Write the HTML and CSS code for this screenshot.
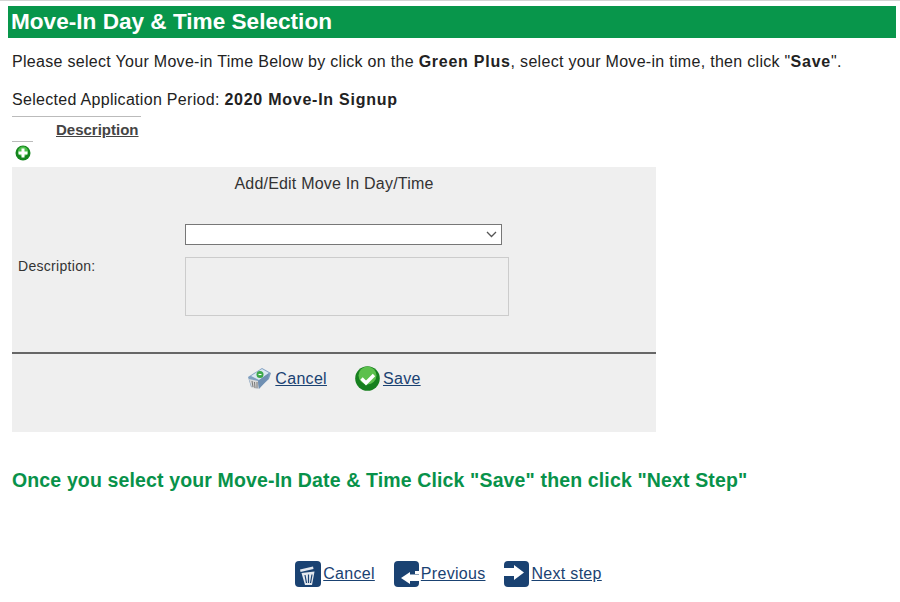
FILE: index.html
```html
<!DOCTYPE html>
<html lang="en">
<head>
  <meta charset="UTF-8" />
  <title>Move-In Day &amp; Time Selection</title>
  <link rel="stylesheet" href="styles.css">
</head>
<body>
  <h1 class="title">Move-In Day &amp; Time Selection</h1>

  <p class="intro">Please select Your Move-in Time Below by click on the <b>Green Plus</b>, select your Move-in time, then click "<b>Save</b>".</p>
  <p class="period">Selected Application Period: <b>2020 Move-In Signup</b></p>

  <!-- Tabla vacia con boton de agregar -->
  <div class="list-head">
    <a href="#" class="col-name">Description</a>
  </div>
  <div class="list-add">
    <svg width="16" height="16" viewBox="0 0 16 16">
      <circle cx="8" cy="8" r="7.500" fill="#14861e"/>
      <circle cx="8" cy="6.500" r="5" fill="#4cc04a"/>
      <path d="M6.500 3.500h3v3h3v3h-3v3h-3v-3h-3v-3h3z" fill="#fff"/>
    </svg>
  </div>

  <div class="edit-panel">
    <div class="edit-title">Add/Edit Move In Day/Time</div>
    <div class="edit-form">
      <label class="edit-label">Description:</label>
      <div class="edit-fields">
        <div class="fake-select">
          <svg width="11" height="7" viewBox="0 0 11 7"><path d="M1 1l4.500 4.500L10 1" fill="none" stroke="#555" stroke-width="1.300"/></svg>
        </div>
        <div class="fake-textarea"></div>
      </div>
    </div>
    <div class="edit-actions">
      <a href="#" class="action">
        <svg width="25" height="25" viewBox="0 0 25 25">
          <path d="M1 11L15 2l9 5-2 6-11 10-7-2z" fill="#7f9fc0"/>
          <path d="M4 10l11-7 7 4-10 7z" fill="#dbe7f2"/>
          <path d="M2 13l9 2 1 8-7-1z" fill="#d9d9d9"/>
          <path d="M11 15l11-8-1 6-9 10z" fill="#6f8fb2"/>
          <circle cx="13" cy="8.500" r="3.500" fill="#3aa648"/>
          <path d="M11.500 8.500h3" stroke="#fff" stroke-width="1.200"/>
          <path d="M5 15l1 6M7.500 16l.5 6M10 16v6" stroke="#777" stroke-width="1"/>
        </svg>
        <span>Cancel</span>
      </a>
      <a href="#" class="action">
        <svg width="25" height="25" viewBox="0 0 25 25">
          <circle cx="12.500" cy="12.500" r="12.300" fill="#17801f"/>
          <circle cx="12.500" cy="9.500" r="9" fill="#5cc04c"/>
          <path d="M6.500 12.500l4.500 4.500 8-8" fill="none" stroke="#fff" stroke-width="3.400"/>
        </svg>
        <span>Save</span>
      </a>
    </div>
  </div>

  <p class="notice">Once you select your Move-In Date &amp; Time Click "Save" then click "Next Step"</p>

  <div class="steps">
    <a href="#" class="step">
      <svg width="26" height="26" viewBox="0 0 26 26">
        <rect width="26" height="26" rx="4" fill="#1a4272"/>
        <path d="M5 8.500l13-3 .5 2.500-13 3z" fill="#e4e8ee"/>
        <path d="M6.500 12l13-1.500L17 24H10z" fill="#e4e8ee"/>
        <path d="M10 14l1.500 8M13.500 13.500v8.500M17 13.500l-1.500 8.500" stroke="#1a4272" stroke-width="1.200"/>
      </svg>
      <span>Cancel</span>
    </a>
    <a href="#" class="step">
      <svg width="25" height="26" viewBox="0 0 25 26">
        <rect width="25" height="26" rx="4" fill="#1a4272"/>
        <path d="M21 10h4v3h-4z" fill="#fff"/>
        <path d="M7 17l9-6v2.500h9v6.500h-9v3z" fill="#fff"/>
      </svg>
      <span>Previous</span>
    </a>
    <a href="#" class="step">
      <svg width="25" height="26" viewBox="0 0 25 26">
        <rect width="25" height="26" rx="4" fill="#1a4272"/>
        <path d="M0 7h10V4l10 7.500L10 19v-4H0z" fill="#fff"/>
      </svg>
      <span>Next step</span>
    </a>
  </div>
</body>
</html>
```

FILE: styles.css
```css
* {
  box-sizing: border-box;
}

body {
  margin: 0;
  padding: 5px 4px 0 8px;
  height: 602px;
  overflow: hidden;
  background: #fff;
  border-top: 1px solid #d4d4d4;
  color: #222;
  font-family: "Liberation Sans", Arial, sans-serif;
  font-size: 16px;
  letter-spacing: 0.3px;
}

b {
  letter-spacing: 0.75px;
}

a {
  color: #1a4272;
}

.title {
  margin: 0;
  height: 32px;
  padding-left: 3px;
  background: #08964b;
  color: #fff;
  font-size: 22.600px;
  line-height: 32px;
  font-weight: bold;
  letter-spacing: 0;
}

.intro {
  margin: 14px 0 0 4px;
  line-height: 20px;
}

.period {
  margin: 18px 0 0 4px;
  line-height: 20px;
}

.list-head {
  margin: 6px 0 0 4px;
  width: 129px;
  height: 25px;
  padding-left: 44px;
  border-top: 1px solid #bbb;
}

.col-name {
  color: #444;
  font-size: 15px;
  font-weight: bold;
  letter-spacing: 0;
  line-height: 26px;
}

.list-add {
  margin-left: 4px;
  width: 21px;
  height: 26px;
  padding: 3px 0 0 3px;
  border-top: 1px solid #bbb;
}

.edit-panel {
  margin-left: 4px;
  width: 644px;
  height: 265px;
  background: #efefef;
  color: #333;
}

.edit-title {
  padding-top: 7px;
  text-align: center;
  letter-spacing: 0.2px;
  line-height: 19px;
}

.edit-form {
  display: flex;
  height: 161px;
  padding: 31px 0 0 6px;
  border-bottom: 2px solid #666;
}

.edit-label {
  width: 167px;
  padding-top: 33px;
  font-size: 14px;
  letter-spacing: 0.3px;
  line-height: 18px;
}

.edit-fields {
  display: flex;
  flex-direction: column;
  gap: 12px;
}

.fake-select {
  display: flex;
  align-items: center;
  justify-content: flex-end;
  width: 317px;
  height: 21px;
  padding-right: 4px;
  background: #fff;
  border: 1px solid #777;
}

.fake-textarea {
  width: 324px;
  height: 59px;
  border: 1px solid #ccc;
}

.edit-actions {
  display: flex;
  justify-content: center;
  gap: 28px;
  padding-top: 12px;
}

.action {
  display: flex;
  align-items: center;
  gap: 3px;
}

.notice {
  margin: 36px 0 0 4px;
  color: #08924a;
  font-size: 19.500px;
  font-weight: bold;
  letter-spacing: 0.14px;
  line-height: 24px;
}

.steps {
  display: flex;
  justify-content: center;
  gap: 19px;
  margin-top: 69px;
  padding-right: 7px;
}

.step {
  display: flex;
  align-items: center;
  gap: 2px;
}
```
